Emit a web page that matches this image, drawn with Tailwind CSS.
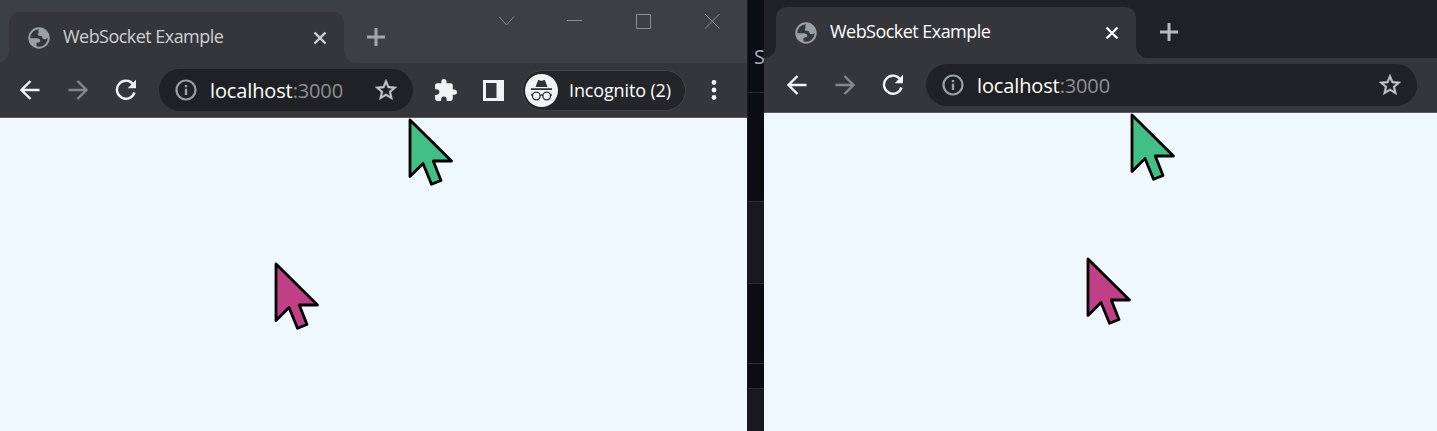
<!DOCTYPE html>
<html lang="en">
<head>
<meta charset="utf-8">
<title>WebSocket Example</title>
<script src="https://cdn.jsdelivr.net/npm/@tailwindcss/browser@4"></script>
</head>
<body class="h-[431px] w-[1437px] overflow-hidden bg-[#0a0d12] font-['Open_Sans','Noto_Sans',sans-serif]">
<svg class="hidden">
  <symbol id="globe" viewBox="0 0 22 22"><circle cx="11" cy="11" r="9.7" fill="none" stroke="#9aa0a6" stroke-width="2"/><path fill="#9aa0a6" d="M12.2 1.5C10.6 2.6 10 3.700 10.300 4.700C10.700 5.800 11 6 10.200 6.700C9.300 7.400 9.600 8.300 11 8.700L14 9.300C14.300 11 14.800 12 16.300 12.300C18 12.500 18.500 11 20.800 10.700C20.500 5.500 17 2 12.200 1.500ZM1.500 11.300H8.500C11 11.300 12.500 12.400 12.300 14.100C12.100 15.700 10.400 15.500 9 15.800C8 16.100 8.400 17.100 8.600 17.700C8.900 18.600 8.300 20 7.600 20.200C4 18.700 1.500 15.500 1.500 11.300Z"/></symbol>
  <symbol id="back" viewBox="0 0 20 20"><path d="M19.500 10H2M10.500 1L1.500 10L10.500 19" fill="none" stroke="currentColor" stroke-width="2.400"/></symbol>
  <symbol id="reload" viewBox="0 0 22 22"><path d="M17.600 4.600A9 9 0 1 0 19.500 13.500" fill="none" stroke="currentColor" stroke-width="2.400"/><path d="M21 .8V9.200H12.700Z" fill="currentColor"/></symbol>
  <symbol id="info" viewBox="0 0 22 22"><circle cx="11" cy="11" r="9.500" fill="none" stroke="#9aa0a6" stroke-width="2.200"/><path d="M11 9.800V16M11 6V8.200" stroke="#9aa0a6" stroke-width="2.400"/></symbol>
  <symbol id="star" viewBox="0 0 24 24"><path fill="#c3c4c6" stroke="#c3c4c6" stroke-width=".4" d="M22 9.240l-7.190-.62L12 2 9.190 8.630 2 9.240l5.460 4.730L5.820 21 12 17.270 18.180 21l-1.630-7.030L22 9.240zM12 15.400l-3.760 2.270 1-4.280-3.320-2.880 4.380-.38L12 6.100l1.710 4.040 4.380.38-3.320 2.880 1 4.280L12 15.400z"/></symbol>
  <symbol id="cross" viewBox="0 0 14 14"><path d="M1.500 1.500L12.500 12.500M12.500 1.500L1.500 12.500" stroke="currentColor" stroke-width="2.400"/></symbol>
  <symbol id="plus" viewBox="0 0 18 18"><path d="M9 0V18M0 9H18" stroke="currentColor" stroke-width="3"/></symbol>
  <symbol id="foot" viewBox="0 0 12 12"><path d="M12 0V12H0A12 12 0 0 0 12 0Z" fill="#35363a"/></symbol>
  <symbol id="pointer" viewBox="-3 -3 50 72"><path d="M0 0L41.500 41H23.300L31 60.500L21.500 64.200L13 43.500L0 56.500Z" fill="currentColor" stroke="#000" stroke-width="2.800" stroke-linejoin="round"/></symbol>
</svg>
<div class="flex h-full">
  <section class="relative h-full w-[747px] shrink-0 overflow-hidden bg-[#f0f8ff]">
    <header class="flex h-[63px] bg-[#3c4043] pt-3">
      <div class="flex h-[51px] w-[9px] shrink-0 items-end justify-end"><svg class="h-3 w-3 shrink-0"><use href="#foot"/></svg></div>
      <div class="flex h-[51px] w-[335px] shrink-0 items-center rounded-t-[11px] bg-[#35363a] pr-[17px] pl-[19px]">
        <svg class="h-[22px] w-[22px]"><use href="#globe"/></svg>
        <span class="ml-[13px] pb-[3px] text-[18px] leading-6 tracking-[-0.54px] whitespace-nowrap text-[#cfd0d2]">WebSocket Example</span>
        <svg class="ml-auto h-[14px] w-[14px] text-[#cfd0d2]"><use href="#cross"/></svg>
      </div>
      <div class="flex h-[51px] w-[23px] items-end"><svg class="h-3 w-3 -scale-x-100"><use href="#foot"/></svg></div>
      <svg class="mt-4 h-[18px] w-[18px] text-[#a4a7a9]"><use href="#plus"/></svg>
      <svg class="ml-[112px] h-[20px] w-[226px]" viewBox="0 0 226 20" fill="none" stroke="#8d9092"><path d="M2 4.500L9.500 13L17 4.500M70 8.500H85M139.500 2.500H153.500V16.500H139.500ZM208 2L222.500 16.500M222.500 2L208 16.500"/></svg>
    </header>
    <div class="flex h-[55px] items-center border-b border-[#5d5963] bg-[#35363a] pl-[20px] text-[#f1f3f4]">
      <svg class="h-5 w-5"><use href="#back"/></svg>
      <svg class="ml-7 h-5 w-5 -scale-x-100 text-[#85878a]"><use href="#back"/></svg>
      <svg class="ml-[27px] h-[22px] w-[22px]"><use href="#reload"/></svg>
      <div class="ml-[22px] flex h-[42px] w-[254px] items-center rounded-full bg-[#202124] pr-[14px] pl-[16px]">
        <svg class="h-[22px] w-[22px]"><use href="#info"/></svg>
        <span class="ml-[13px] pt-px text-[20px] leading-6 tracking-[-0.13px] whitespace-nowrap text-white">localhost<span class="text-[#8d9094]">:3000</span></span>
        <svg class="ml-auto h-[26px] w-[26px]"><use href="#star"/></svg>
      </div>
      <svg class="ml-[20px] h-[25px] w-[25px]" viewBox="0 0 24 24" fill="currentColor"><path d="M20.500 11H19V7c0-1.100-.9-2-2-2h-4V3.500a2.500 2.500 0 0 0-5 0V5H4c-1.100 0-1.990.9-1.990 2v3.800H3.500c1.490 0 2.700 1.210 2.700 2.700s-1.210 2.700-2.700 2.700H2V20c0 1.100.9 2 2 2h3.800v-1.500c0-1.490 1.210-2.700 2.700-2.700s2.700 1.210 2.700 2.700V22H17c1.100 0 2-.9 2-2v-4h1.500a2.500 2.500 0 0 0 0-5z"/></svg>
      <svg class="ml-[25px] h-[21px] w-[21px]" viewBox="0 0 21 21"><path fill="#f1f3f4" d="M0 0H21V21H0Z"/><path fill="#35363a" d="M3 3H13.500V18H3Z"/></svg>
      <div class="ml-[18px] flex h-[41px] w-[164px] items-center rounded-full border border-[#45464a] bg-[#242528] pl-[2px]">
        <svg class="h-[33px] w-[33px] shrink-0" viewBox="0 0 33 33"><circle cx="16.500" cy="16.500" r="16.500" fill="#f1f3f4"/><path d="M10.500 13L13 6.600C13.300 6 14 6 14.500 6.300C16 7 17 7 18.500 6.300C19 6 19.700 6 20 6.600L22.500 13ZM6 14.300H27V16H6Z" fill="#303134"/><g fill="none" stroke="#303134" stroke-width="1.300"><circle cx="11.300" cy="22" r="3.800"/><circle cx="21.700" cy="22" r="3.800"/><path d="M15 21.500Q16.500 20.500 18 21.500M6 21H7.500M25.500 21H27"/></g></svg>
        <span class="ml-[11px] pb-px text-[18px] leading-6 tracking-[-0.14px] whitespace-nowrap text-white">Incognito (2)</span>
      </div>
      <svg class="ml-[25px] h-5 w-[6px]" viewBox="0 0 6 20" fill="currentColor"><circle cx="3" cy="2.500" r="2.400"/><circle cx="3" cy="10" r="2.400"/><circle cx="3" cy="17.500" r="2.400"/></svg>
    </div>
    <svg class="absolute top-[117px] left-[407px] h-[72px] w-[50px] text-[#42bf84]"><use href="#pointer"/></svg>
    <svg class="absolute top-[261px] left-[273px] h-[72px] w-[50px] text-[#bf4086]"><use href="#pointer"/></svg>
  </section>
  <aside class="flex h-full w-[17px] shrink-0 flex-col overflow-hidden border-l border-[#17191c]">
    <div class="h-[93px] shrink-0 border-b border-[#24272b] pt-[45px] pl-[6px] text-[20px] leading-6 text-[#a3b1c2]">S</div>
    <div class="h-[109px] shrink-0 border-b border-[#2b2e32]"></div>
    <div class="h-[82px] shrink-0 border-b border-[#2b2e32] bg-[#15181c]"></div>
    <div class="h-[80px] shrink-0 border-b border-[#2b2e32]"></div>
    <div class="h-[25px] shrink-0 border-b border-[#2b2e32]"></div>
    <div class="grow bg-[#15181c]"></div>
  </aside>
  <section class="relative h-full w-[673px] shrink-0 overflow-hidden bg-[#f0f8ff]">
    <header class="flex h-[58px] bg-[#202124] pt-[7px]">
      <div class="flex h-[51px] w-3 shrink-0 items-end"><svg class="h-3 w-3"><use href="#foot"/></svg></div>
      <div class="flex h-[51px] w-[360px] shrink-0 items-center rounded-t-[11px] bg-[#35363a] pr-[17px] pl-[19px]">
        <svg class="h-[22px] w-[22px]"><use href="#globe"/></svg>
        <span class="ml-[13px] pb-[3px] text-[18px] leading-6 tracking-[-0.54px] whitespace-nowrap text-white">WebSocket Example</span>
        <svg class="ml-auto h-[14px] w-[14px] text-white"><use href="#cross"/></svg>
      </div>
      <div class="flex h-[51px] w-6 items-end"><svg class="h-3 w-3 -scale-x-100"><use href="#foot"/></svg></div>
      <svg class="mt-4 h-[18px] w-[18px] text-[#b8b9bb]"><use href="#plus"/></svg>
    </header>
    <div class="flex h-[55px] items-center border-b border-[#5d5e63] bg-[#35363a] pl-[23px] text-[#f1f3f4]">
      <svg class="h-5 w-5"><use href="#back"/></svg>
      <svg class="ml-7 h-5 w-5 -scale-x-100 text-[#85878a]"><use href="#back"/></svg>
      <svg class="ml-[27px] h-[22px] w-[22px]"><use href="#reload"/></svg>
      <div class="ml-[22px] flex h-[42px] w-[491px] items-center rounded-full bg-[#202124] pr-[14px] pl-[16px]">
        <svg class="h-[22px] w-[22px]"><use href="#info"/></svg>
        <span class="ml-[13px] pt-px text-[20px] leading-6 tracking-[-0.13px] whitespace-nowrap text-white">localhost<span class="text-[#8d9094]">:3000</span></span>
        <svg class="ml-auto h-[26px] w-[26px]"><use href="#star"/></svg>
      </div>
    </div>
    <svg class="absolute top-[112px] left-[365px] h-[72px] w-[50px] text-[#42bf84]"><use href="#pointer"/></svg>
    <svg class="absolute top-[256px] left-[321px] h-[72px] w-[50px] text-[#bf4086]"><use href="#pointer"/></svg>
  </section>
</div>
</body>
</html>
